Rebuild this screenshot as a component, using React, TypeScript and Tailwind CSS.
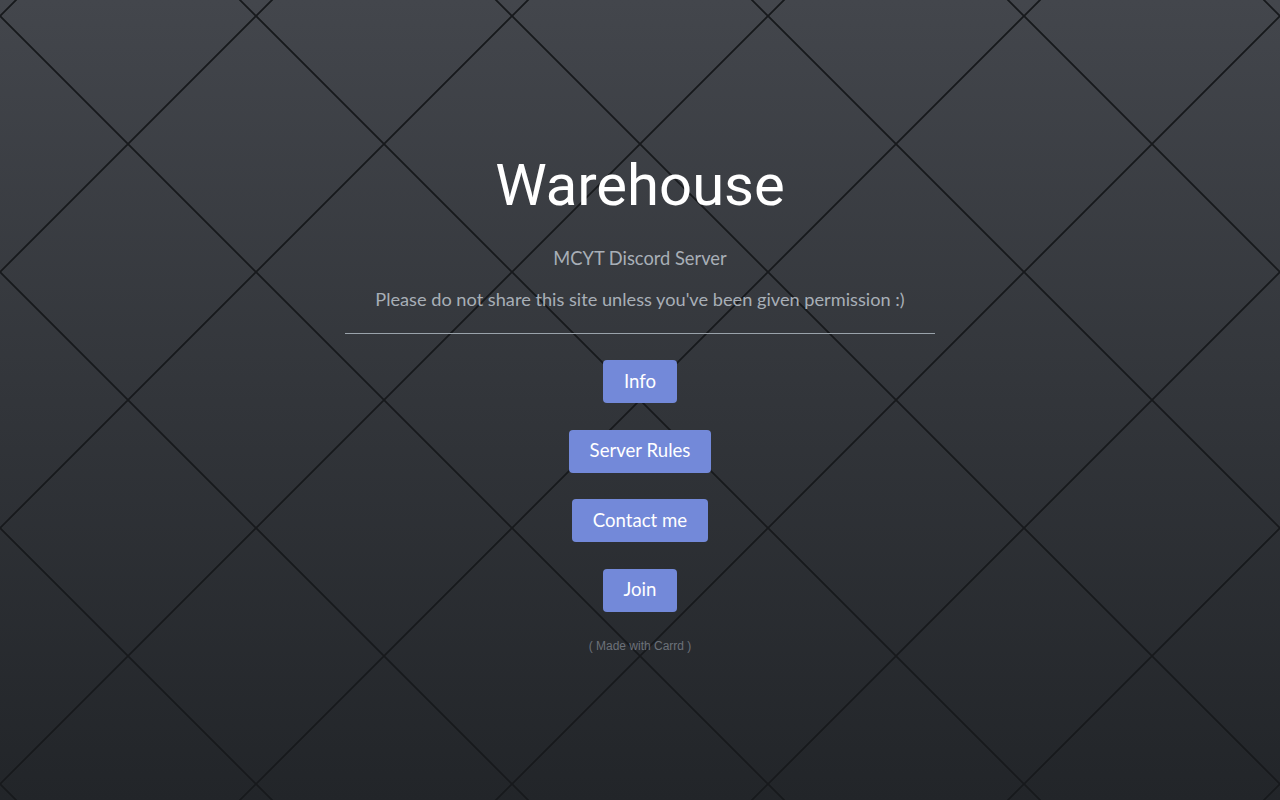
const BUTTONS = ["Info", "Server Rules", "Contact me", "Join"];

function DiamondGrid() {
  return (
    <svg className="absolute inset-0 h-full w-full" aria-hidden="true">
      <defs>
        <pattern id="diamonds" x="0" y="16" width="256" height="256" patternUnits="userSpaceOnUse">
          <path d="M0 0 L256 256 M256 0 L0 256" stroke="#17191c" strokeWidth="1.9" fill="none" />
        </pattern>
      </defs>
      <rect width="100%" height="100%" fill="url(#diamonds)" />
    </svg>
  );
}

export default function App() {
  return (
    <div className="relative min-h-[800px] w-full overflow-hidden bg-gradient-to-b from-[#43464c] to-[#222529]">
      <DiamondGrid />
      <main className="relative flex flex-col items-center pt-[152px]">
        <h1 className="font-['Roboto',sans-serif] text-[58px] leading-[66px] text-white">Warehouse</h1>
        <p className="mt-[28px] font-['Lato',sans-serif] text-[18.3px] leading-6 text-[#a8afb7]">
          MCYT Discord Server
        </p>
        <p className="mt-[17px] font-['Lato',sans-serif] text-[18.2px] leading-6 text-[#a8afb7]">
          Please do not share this site unless you've been given permission :)
        </p>
        <hr className="mt-[22px] w-[590px] border-0 border-t border-[#9aa3ab]" />
        <div className="mt-[26px] flex flex-col items-center gap-[26.5px]">
          {BUTTONS.map((b) => (
            <a
              key={b}
              href="#"
              className="flex h-[43px] items-center rounded-[4px] bg-[#7389d9] px-[21px] font-['Lato',sans-serif] text-[18.6px] text-white"
            >
              {b}
            </a>
          ))}
        </div>
        <p className="mt-[25px] font-['Liberation_Sans',sans-serif] text-[12px] text-[#6c7179]">( Made with Carrd )</p>
      </main>
    </div>
  );
}
